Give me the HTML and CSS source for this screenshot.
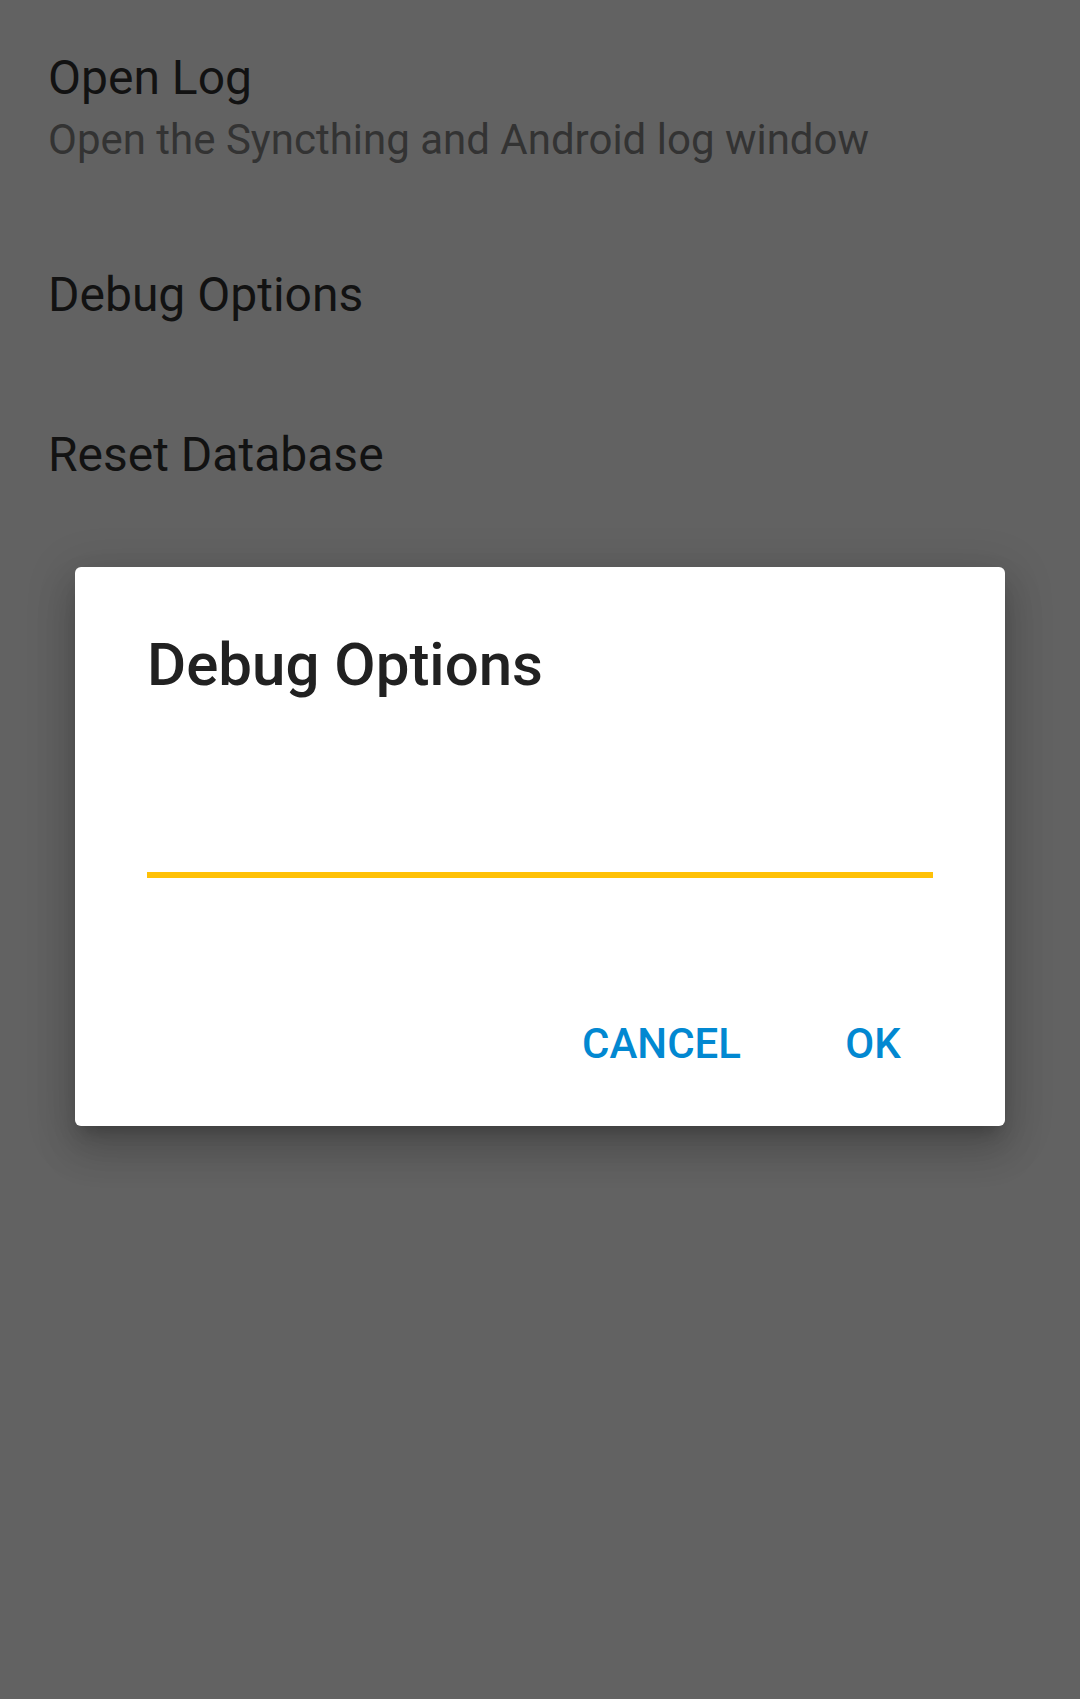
FILE: index.html
```html
<!DOCTYPE html>
<html>
<head>
<meta charset="utf-8">
<link rel="stylesheet" href="styles.css">
</head>
<body>
<div class="screen">
  <div class="list">
    <div class="pref pref-two">
      <div class="pref-title">Open Log</div>
      <div class="pref-summary">Open the Syncthing and Android log window</div>
    </div>
    <div class="pref pref-one">
      <div class="pref-title">Debug Options</div>
    </div>
    <div class="pref pref-one">
      <div class="pref-title">Reset Database</div>
    </div>
  </div>
  <div class="dialog">
    <div class="dialog-title">Debug Options</div>
    <div class="dialog-input"></div>
    <div class="dialog-buttons">
      <div class="btn btn-cancel">CANCEL</div>
      <div class="btn btn-ok">OK</div>
    </div>
  </div>
</div>
</body>
</html>
```

FILE: styles.css
```css
html, body {
  margin: 0;
  padding: 0;
}
body {
  width: 1080px;
  height: 1699px;
  background: #626262;
  font-family: Roboto, "Noto Sans", "Liberation Sans", sans-serif;
  overflow: hidden;
}
.screen {
  position: relative;
  width: 1080px;
  height: 1699px;
}
.list {
  display: flex;
  flex-direction: column;
  padding-top: 46px;
}
.pref {
  padding: 0 48px;
}
.pref-title {
  font-size: 48px;
  line-height: 64px;
  color: #121212;
}
.pref-summary {
  font-size: 42px;
  line-height: 56px;
  color: #333333;
  margin-top: 2px;
}
.pref-two {
  height: 217px;
}
.pref-one {
  height: 160px;
}
.dialog {
  position: absolute;
  left: 75px;
  top: 567px;
  width: 930px;
  height: 559px;
  box-sizing: border-box;
  background: #ffffff;
  border-radius: 6px;
  box-shadow: 0 24px 38px 3px rgba(0,0,0,0.14), 0 9px 46px 8px rgba(0,0,0,0.12), 0 11px 15px -7px rgba(0,0,0,0.2);
  padding: 62px 72px 0 72px;
  display: flex;
  flex-direction: column;
}
.dialog-title {
  font-size: 60px;
  line-height: 72px;
  font-weight: 500;
  color: #212121;
}
.dialog-input {
  margin-top: 110px;
  height: 61px;
  border-bottom: 6px solid #ffc107;
}
.dialog-buttons {
  display: flex;
  justify-content: flex-end;
  margin: 100px -36px 0 -72px;
}
.btn {
  height: 132px;
  min-width: 192px;
  box-sizing: border-box;
  padding: 0 36px;
  display: flex;
  align-items: center;
  justify-content: center;
  font-size: 42px;
  line-height: 48px;
  font-weight: 500;
  color: #0288d1;
}
```
